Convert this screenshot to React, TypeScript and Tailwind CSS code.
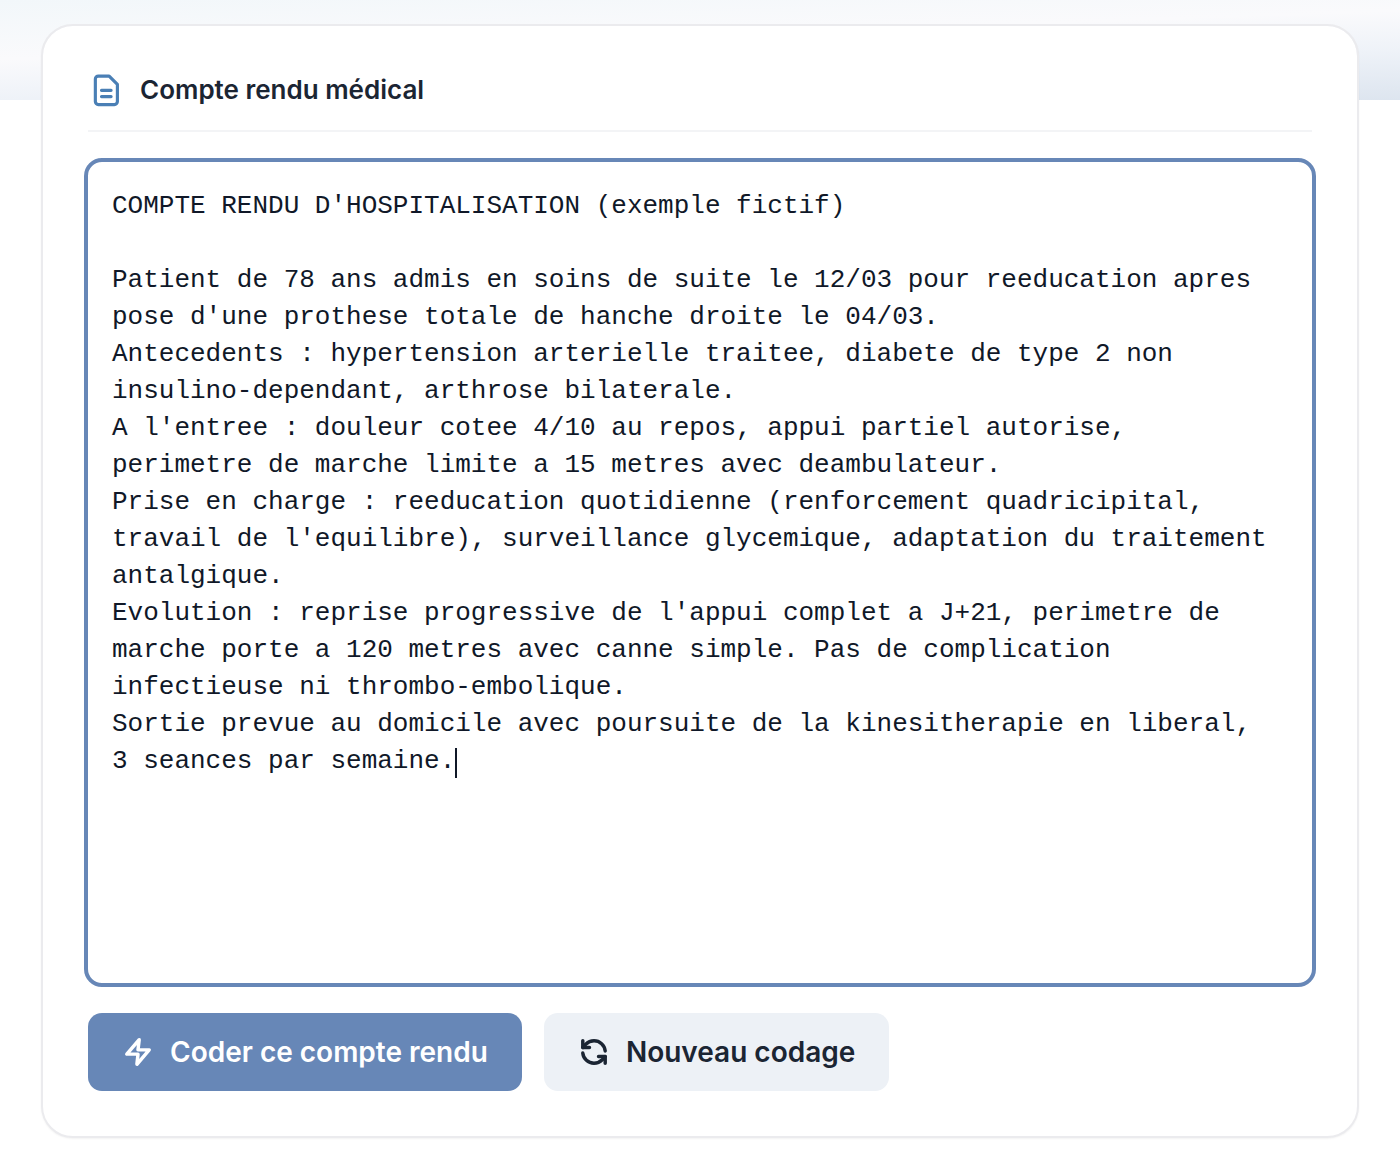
import { useEffect, useRef, useState } from "react";

const SAMPLE_REPORT = `COMPTE RENDU D'HOSPITALISATION (exemple fictif)

Patient de 78 ans admis en soins de suite le 12/03 pour reeducation apres pose d'une prothese totale de hanche droite le 04/03.
Antecedents : hypertension arterielle traitee, diabete de type 2 non insulino-dependant, arthrose bilaterale.
A l'entree : douleur cotee 4/10 au repos, appui partiel autorise, perimetre de marche limite a 15 metres avec deambulateur.
Prise en charge : reeducation quotidienne (renforcement quadricipital, travail de l'equilibre), surveillance glycemique, adaptation du traitement antalgique.
Evolution : reprise progressive de l'appui complet a J+21, perimetre de marche porte a 120 metres avec canne simple. Pas de complication infectieuse ni thrombo-embolique.
Sortie prevue au domicile avec poursuite de la kinesitherapie en liberal, 3 seances par semaine.`;

function ReportIcon() {
  return (
    <svg
      viewBox="0 0 24 24"
      className="size-9 shrink-0 text-[#4a7fb5]"
      fill="none"
      stroke="currentColor"
      strokeWidth="2.1"
      strokeLinecap="round"
      strokeLinejoin="round"
      aria-hidden="true"
    >
      <path d="M4.9 4.7a2 2 0 0 1 2-2h7.2l5.5 5.6v11.4a2 2 0 0 1-2 2H6.9a2 2 0 0 1-2-2z" />
      <path d="M9 12.2h6.4M9 16.4h6.4" />
    </svg>
  );
}

function BoltIcon() {
  return (
    <svg
      viewBox="0 0 24 24"
      className="size-8 shrink-0"
      fill="none"
      stroke="currentColor"
      strokeWidth="2.6"
      strokeLinecap="round"
      strokeLinejoin="round"
      aria-hidden="true"
    >
      <polygon points="12.9 2.8 3.6 13.6 12 13.6 11.2 21.2 20.4 10.4 12 10.4" />
    </svg>
  );
}

function RestartIcon() {
  return (
    <svg
      viewBox="0 0 24 24"
      className="size-8 shrink-0"
      fill="none"
      stroke="currentColor"
      strokeWidth="2.6"
      strokeLinecap="round"
      strokeLinejoin="round"
      aria-hidden="true"
    >
      <path d="M20.4 11.2A8.4 8.4 0 0 0 12 3.6a9 9 0 0 0-6.2 2.6L3.6 8.6" />
      <path d="M3.6 3.6v5h5" />
      <path d="M3.6 12.8A8.4 8.4 0 0 0 12 20.4a9 9 0 0 0 6.2-2.6l2.2-2.4" />
      <path d="M15.4 15.4h5v5" />
    </svg>
  );
}

export default function App() {
  const [report, setReport] = useState(SAMPLE_REPORT);
  const inputRef = useRef<HTMLTextAreaElement>(null);
  const untouched = report === SAMPLE_REPORT;

  useEffect(() => {
    const el = inputRef.current;
    if (!el) return;
    el.focus();
    el.setSelectionRange(el.value.length, el.value.length);
  }, []);

  const reset = () => {
    setReport("");
    inputRef.current?.focus();
  };

  return (
    <div className="min-h-screen bg-white bg-[linear-gradient(178deg,#f2f7fa_0%,#fafafc_40%,#eef2f8_67%,#dde5ef_100%)] bg-[length:100%_100px] bg-no-repeat px-[41px] pt-6 pb-4 font-['Inter',sans-serif] text-[#1b2533]">
      <main className="rounded-[32px] border-2 border-[#ebebee] bg-white bg-clip-padding p-[45px] pt-[46px] shadow-xs">
        {/* Header */}
        <div className="flex items-center gap-4 border-b-2 border-[#f3f4f6] pb-[22px]">
          <ReportIcon />
          <h1 className="text-[26px] leading-9 font-semibold">
            <label htmlFor="report">Compte rendu médical</label>
          </h1>
        </div>

        {/* Report text */}
        <div className="relative mt-[30px] font-['Liberation_Mono',monospace] text-[26px] leading-[37px] text-[#101828]">
          <textarea
            id="report"
            ref={inputRef}
            value={report}
            onChange={(e) => setReport(e.target.value)}
            spellCheck={false}
            className={`block h-[821px] w-full resize-none rounded-[14px] bg-white pt-[26px] pr-8 pb-6 pl-6 outline-4 outline-[#6787b7] ${untouched ? "caret-transparent" : "caret-[#101828]"}`}
          />
          {/* Steady caret at the end of the sample */}
          {untouched && (
            <span
              aria-hidden="true"
              className="pointer-events-none absolute top-[586px] left-[calc(24px+22ch)] h-[30px] w-[2px] bg-[#101828]"
            />
          )}
        </div>

        {/* Actions */}
        <div className="mt-[30px] flex flex-wrap gap-[22px]">
          <button
            type="button"
            className="flex h-[78px] items-center gap-4 rounded-[14px] bg-[#6787b7] px-[34px] text-[28px] font-semibold text-white"
          >
            <BoltIcon />
            Coder ce compte rendu
          </button>
          <button
            type="button"
            onClick={reset}
            className="flex h-[78px] items-center gap-4 rounded-[14px] bg-[#edf1f6] px-[34px] text-[28px] font-semibold"
          >
            <RestartIcon />
            Nouveau codage
          </button>
        </div>
      </main>
    </div>
  );
}
